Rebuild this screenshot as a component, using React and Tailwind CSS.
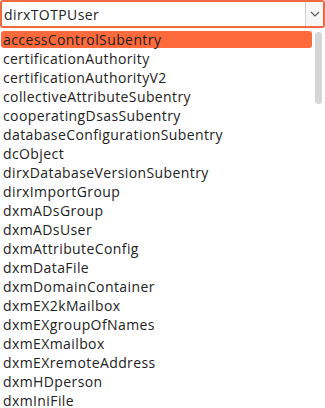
import React from "react";

const items = [
  "accessControlSubentry",
  "certificationAuthority",
  "certificationAuthorityV2",
  "collectiveAttributeSubentry",
  "cooperatingDsasSubentry",
  "databaseConfigurationSubentry",
  "dcObject",
  "dirxDatabaseVersionSubentry",
  "dirxImportGroup",
  "dxmADsGroup",
  "dxmADsUser",
  "dxmAttributeConfig",
  "dxmDataFile",
  "dxmDomainContainer",
  "dxmEX2kMailbox",
  "dxmEXgroupOfNames",
  "dxmEXmailbox",
  "dxmEXremoteAddress",
  "dxmHDperson",
  "dxmIniFile",
];

export default function App() {
  return (
    <div
      className="w-[325px] h-[408px] bg-white overflow-hidden text-[14px] tracking-[0.4px] leading-[19px] text-[#222]"
      style={{ fontFamily: '"Open Sans", sans-serif' }}
    >
      <div className="h-[28px] flex border-2 border-[#f06a40] rounded-[3px]">
        <div className="flex-1 flex items-center pl-[2px]">dirxTOTPUser</div>
        <div className="w-[18px] flex items-center justify-center bg-[#f7f7f7] border-l border-[#cfcfcf]">
          <svg width="10" height="6" viewBox="0 0 10 6" fill="none">
            <path d="M1 1l4 4 4-4" stroke="#555" strokeWidth="1.1" />
          </svg>
        </div>
      </div>
      <div className="flex pt-[3px]">
        <div className="flex-1 pl-[1px]">
          {items.map((it, i) => (
            <div
              key={it}
              className={`h-[19px] flex items-center pl-[2px] ${
                i === 0 ? "bg-[#ff6a3d] rounded-[3px] !h-[17px] mb-[1px]" : ""
              }`}
            >
              {it}
            </div>
          ))}
        </div>
        <div className="w-[13px] flex justify-center pt-[1px]">
          <div className="w-[7px] h-[72px] bg-[#d6d6d6] rounded-full" />
        </div>
      </div>
    </div>
  );
}
